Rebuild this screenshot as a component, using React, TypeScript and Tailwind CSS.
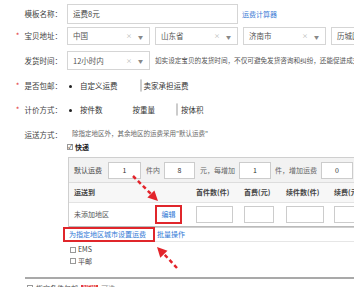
import React from 'react';

const Label = ({ text, req }: { text: string; req?: boolean }) => (
  <div className="w-[62px] shrink-0 flex items-center justify-end text-[#444]">
    {req && <span className="mr-[5px] text-[#e4393c] text-[8px] leading-none">*</span>}
    <span>{text}</span>
  </div>
);

const Select = ({ value, w = 'w-[83px]' }: { value: string; w?: string }) => (
  <div className={`${w} h-full shrink-0 border border-[#d5d5d5] bg-white flex items-center pl-[5px] pr-[6px]`}>
    <span className="flex-1 text-[#555]">{value}</span>
    <span className="text-[#aaa] text-[6px] mr-[6px]">×</span>
    <span className="text-[#888] text-[5px]">▼</span>
  </div>
);

const Radio = ({ on }: { on?: boolean }) =>
  on ? (
    <span className="w-[7px] h-[7px] rounded-full flex items-center justify-center">
      <span className="w-[3px] h-[3px] rounded-full bg-[#222]" />
    </span>
  ) : (
    <span className="w-[8px] h-[8px] rounded-full border border-[#ccc] bg-white" />
  );

const Box = ({ v, w }: { v?: string; w: string }) => (
  <div className={`${w} h-[17px] border border-[#ccc] bg-white flex items-center justify-center text-[#333]`}>
    {v}
  </div>
);

const Check = ({ on }: { on?: boolean }) => (
  <span className="w-[6px] h-[6px] border border-[#999] bg-white flex items-center justify-center text-[6px] leading-none text-[#222]">
    {on ? '✓' : ''}
  </span>
);

export default function App() {
  return (
    <div className="relative w-[354px] h-[287px] overflow-hidden bg-white font-['Noto_Sans_CJK_SC',sans-serif] text-[7.5px] leading-none text-[#333]">
      <div className="pt-[4px]">
        <div className="flex h-[20px] gap-[5px]">
          <Label text="模板名称：" />
          <div className="w-[171px] border border-[#d5d5d5] flex items-center pl-[5px] text-[#444]">运费8元</div>
          <span className="self-center ml-[-1px] text-[#3a7bd5] text-[7px]">运费计算器</span>
        </div>

        <div className="flex h-[18px] gap-[5px] mt-[3px] whitespace-nowrap">
          <Label text="宝贝地址：" req />
          <div className="flex gap-[5px] h-full">
            <Select value="中国" />
            <Select value="山东省" />
            <Select value="济南市" />
            <Select value="历城区" />
          </div>
        </div>

        <div className="flex h-[19px] gap-[5px] mt-[6px] whitespace-nowrap">
          <Label text="发货时间：" />
          <Select value="12小时内" />
          <span className="self-center text-[6.6px] text-[#555]">
            如实设定宝贝的发货时间，不仅可避免发货咨询和纠纷，还能促进成交！
          </span>
        </div>

        <div className="flex h-[20px] gap-[5px] mt-[6px] items-center whitespace-nowrap">
          <Label text="是否包邮：" req />
          <div className="flex items-center">
            <Radio on />
            <span className="ml-[6px]">自定义运费</span>
            <span className="ml-[22px]"><Radio /></span>
            <span className="ml-[2px]">卖家承担运费</span>
          </div>
        </div>

        <div className="flex h-[20px] gap-[5px] mt-[4px] items-center whitespace-nowrap">
          <Label text="计价方式：" req />
          <div className="flex items-center">
            <Radio on />
            <span className="ml-[6px]">按件数</span>
            <span className="ml-[30px]">按重量</span>
            <span className="ml-[21px]"><Radio /></span>
            <span className="ml-[3px]">按体积</span>
          </div>
        </div>

        <div className="flex h-[14px] gap-[5px] mt-[8px] items-center whitespace-nowrap">
          <Label text="运送方式：" />
          <span className="ml-[5px] -mt-[3px] text-[6.5px] text-[#666]">除指定地区外，其余地区的运费采用"默认运费"</span>
        </div>

        <div className="ml-[67px] whitespace-nowrap">
          <div className="flex items-center h-[10px]">
            <Check on />
            <span className="ml-[2px] font-bold text-[#222] text-[7px]">快递</span>
          </div>

          <div className="ml-[1px] mt-[5px] w-[320px] border border-[#cfcfcf]">
            <div className="h-[25px] bg-[#f2f2f2] border-b border-[#ddd] flex items-center pl-[5px] text-[7px]">
              <span className="text-[#444]">默认运费</span>
              <span className="ml-[6px]"><Box v="1" w="w-[33px]" /></span>
              <span className="ml-[5px] text-[#666]">件内</span>
              <span className="ml-[4px]"><Box v="8" w="w-[31px]" /></span>
              <span className="ml-[5px] text-[#666]">元，每增加</span>
              <span className="ml-[4px]"><Box v="1" w="w-[32px]" /></span>
              <span className="ml-[4px] text-[#666]">件，增加运费</span>
              <span className="ml-[4px]"><Box v="0" w="w-[32px]" /></span>
            </div>
            <div className="h-[20px] bg-[#f7f7f7] border-b border-[#e3e3e3] grid grid-cols-[122px_48px_42px_48px_60px] items-center font-bold text-[#444] text-[7px]">
              <span className="pl-[5px]">运送到</span>
              <span className="pl-[5px]">首件数(件)</span>
              <span className="pl-[5px]">首费(元)</span>
              <span className="pl-[5px]">续件数(件)</span>
              <span className="pl-[5px]">续费(元)</span>
            </div>
            <div className="h-[24px] border-b border-[#bbb] grid grid-cols-[122px_48px_42px_48px_60px] items-center text-[7px]">
              <div className="pl-[5px] pr-[9px] flex items-center justify-between">
                <span className="text-[#555]">未添加地区</span>
                <span className="w-[27px] h-[19px] border-2 border-[#e0262b] flex items-center justify-center text-[#2f78d6]">编辑</span>
              </div>
              <div className="pl-[5px]"><Box w="w-[37px]" /></div>
              <div className="pl-[5px]"><Box w="w-[30px]" /></div>
              <div className="pl-[5px]"><Box w="w-[38px]" /></div>
              <div className="pl-[5px]"><Box w="w-[40px]" /></div>
            </div>
          </div>

          <div className="-ml-[4px] -mt-[1px] h-[15px] border-b border-[#e6e6e6] flex items-center text-[7px] text-[#2f78d6]">
            <span className="h-[15px] w-[92px] border-2 border-[#e0262b] flex items-center pl-[4px]">为指定地区城市设置运费</span>
            <span className="ml-[2px]">批量操作</span>
          </div>

          <div className="mt-[2px] ml-[3px] flex items-center h-[11px] text-[7px] text-[#444]">
            <Check />
            <span className="ml-[2px]">EMS</span>
          </div>
          <div className="ml-[3px] flex items-center h-[12px] text-[7px] text-[#444]">
            <Check />
            <span className="ml-[2px]">平邮</span>
          </div>
        </div>

        <div className="ml-[25px] mt-[10px] h-[2px] bg-[#a9a9a9]" />

        <div className="ml-[27px] mt-[4px] flex items-center h-[10px] text-[7px] text-[#555] whitespace-nowrap">
          <Check />
          <span className="ml-[3px]">指定条件包邮</span>
          <span className="ml-[3px] bg-[#e4393c] text-white px-[2px] text-[6px]">NEW</span>
          <span className="ml-[3px] text-[#888]">可选</span>
        </div>
      </div>

      <svg className="absolute inset-0 pointer-events-none" width="354" height="287">
        <line x1="133" y1="176" x2="151" y2="194" stroke="#e3242b" strokeWidth="2.5" strokeDasharray="4 3" />
        <polygon points="158,201 147.4,197.4 154.4,190.4" fill="#e3242b" />
        <line x1="177" y1="268" x2="164" y2="254" stroke="#e3242b" strokeWidth="2.5" strokeDasharray="4 3" />
        <polygon points="157,247 167.5,250.8 160.3,257.7" fill="#e3242b" />
      </svg>
    </div>
  );
}
